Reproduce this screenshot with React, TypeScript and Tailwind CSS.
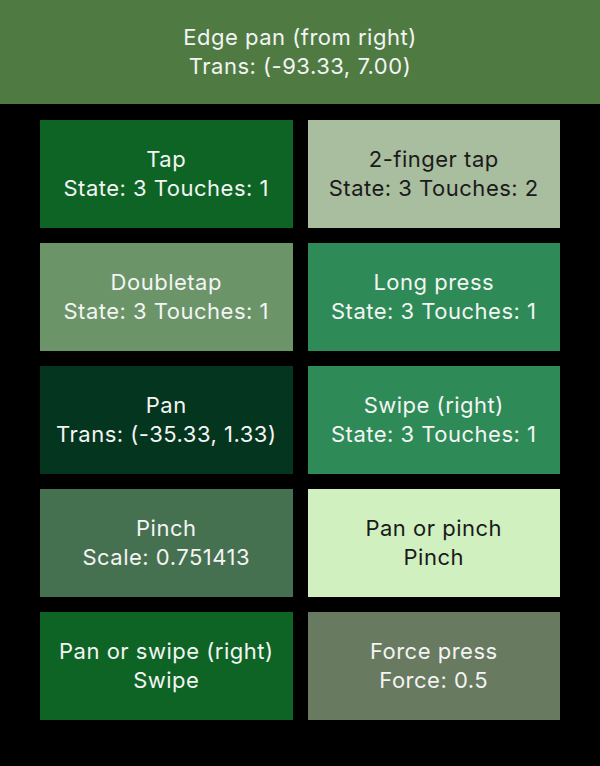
import React from "react";

type Gesture = {
  title: string;
  detail: string;
  bg: string;
  dark?: boolean;
};

const gestures: Gesture[] = [
  { title: "Tap", detail: "State: 3 Touches: 1", bg: "bg-[#0d6424]" },
  { title: "2-finger tap", detail: "State: 3 Touches: 2", bg: "bg-[#a9bd9f]", dark: true },
  { title: "Doubletap", detail: "State: 3 Touches: 1", bg: "bg-[#6b9468]" },
  { title: "Long press", detail: "State: 3 Touches: 1", bg: "bg-[#2e8b57]" },
  { title: "Pan", detail: "Trans: (-35.33, 1.33)", bg: "bg-[#04351f]" },
  { title: "Swipe (right)", detail: "State: 3 Touches: 1", bg: "bg-[#2e8b57]" },
  { title: "Pinch", detail: "Scale: 0.751413", bg: "bg-[#467150]" },
  { title: "Pan or pinch", detail: "Pinch", bg: "bg-[#d0f0c0]", dark: true },
  { title: "Pan or swipe (right)", detail: "Swipe", bg: "bg-[#0d6424]" },
  { title: "Force press", detail: "Force: 0.5", bg: "bg-[#687a60]" },
];

export default function App() {
  return (
    <div className="w-[600px] h-[766px] bg-black font-['Inter','Liberation_Sans',sans-serif] text-[22px] leading-[29px] tracking-[0.5px]">
      {/* Header */}
      <div className="h-[104px] bg-[#4f7b43] flex flex-col items-center justify-center text-[#f4f4f4]">
        <span>Edge pan (from right)</span>
        <span>Trans: (-93.33, 7.00)</span>
      </div>

      {/* Gesture grid */}
      <div className="grid grid-cols-2 gap-x-[15px] gap-y-[15px] px-10 pt-4">
        {gestures.map((g) => (
          <div
            key={g.title}
            className={`h-[108px] flex flex-col items-center justify-center text-center ${g.bg} ${
              g.dark ? "text-[#1a1a1a]" : "text-[#f4f4f4]"
            }`}
          >
            <span>{g.title}</span>
            <span>{g.detail}</span>
          </div>
        ))}
      </div>
    </div>
  );
}
